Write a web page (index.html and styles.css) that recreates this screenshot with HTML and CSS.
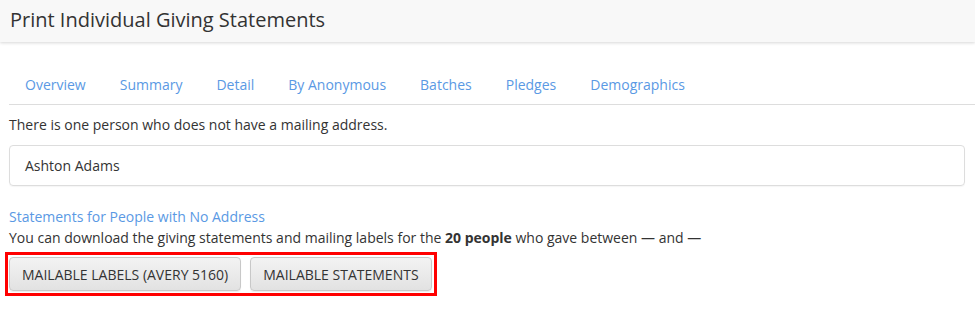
FILE: index.html
```html
<!DOCTYPE html>
<html>
<head>
<meta charset="utf-8">
<link rel="stylesheet" href="styles.css">
</head>
<body>
<header class="page-header">
  <h1 class="page-title">Print Individual Giving Statements</h1>
</header>
<main class="content">
  <nav class="tabs">
    <a class="tab" href="#">Overview</a>
    <a class="tab" href="#">Summary</a>
    <a class="tab" href="#">Detail</a>
    <a class="tab" href="#">By Anonymous</a>
    <a class="tab" href="#">Batches</a>
    <a class="tab" href="#">Pledges</a>
    <a class="tab" href="#">Demographics</a>
  </nav>
  <p class="note">There is one person who does not have a mailing address.</p>
  <div class="person-box">Ashton Adams</div>
  <a class="section-link" href="#">Statements for People with No Address</a>
  <p class="desc">You can download the giving statements and mailing labels for the <strong>20 people</strong> who gave between — and —</p>
  <div class="button-group">
    <button class="btn">MAILABLE LABELS (AVERY 5160)</button>
    <button class="btn">MAILABLE STATEMENTS</button>
  </div>
</main>
</body>
</html>
```
FILE: styles.css
```css
* { box-sizing: border-box; }
body {
  margin: 0;
  font-family: "Open Sans", "Noto Sans", sans-serif;
  font-size: 14px;
  color: #333;
  background: #fff;
}
.page-header {
  height: 42px;
  background: #f8f8f8;
  box-shadow: 0 1px 3px rgba(0,0,0,0.16);
  display: flex;
  align-items: center;
  padding-left: 10px;
}
.page-title {
  margin: 0;
  font-size: 20px;
  font-weight: 400;
  color: #333;
  line-height: 28px;
  position: relative;
  top: -1px;
}
.content {
  padding: 0 10px 0 9px;
}
.tabs {
  display: flex;
  margin-top: 20px;
  margin-right: -10px;
  border-bottom: 1px solid #ddd;
  height: 43px;
}
.tab {
  display: block;
  padding: 13px 17px 0 16px;
  line-height: 20px;
  color: #5a99e4;
  text-decoration: none;
}
.tab + .tab { padding-left: 17px; }
.note {
  margin: 10px 0 0;
  line-height: 20px;
}
.person-box {
  margin-top: 10px;
  height: 41px;
  border: 1px solid #ddd;
  border-radius: 4px;
  padding: 0 15px;
  line-height: 39px;
  box-shadow: 0 1px 1px rgba(0,0,0,0.04);
}
.section-link {
  display: block;
  margin-top: 21px;
  line-height: 20px;
  color: #5a99e4;
  text-decoration: none;
}
.desc {
  margin: 1px 0 0;
  line-height: 20px;
}
.desc strong { font-weight: 700; }
.button-group {
  display: inline-flex;
  gap: 9px;
  margin: 4px 0 0 -4px;
  border: 3px solid #f00;
  padding: 2px 2px 2px 1px;
}
.btn {
  height: 34px;
  padding: 0 12px;
  font-family: "Open Sans", "Noto Sans", sans-serif;
  font-size: 14px;
  color: #333;
  background: linear-gradient(#f3f3f3, #e2e2e2);
  border: 1px solid #c8c8c8;
  border-radius: 4px;
  box-shadow: 0 1px 1px rgba(0,0,0,0.08);
}
```
